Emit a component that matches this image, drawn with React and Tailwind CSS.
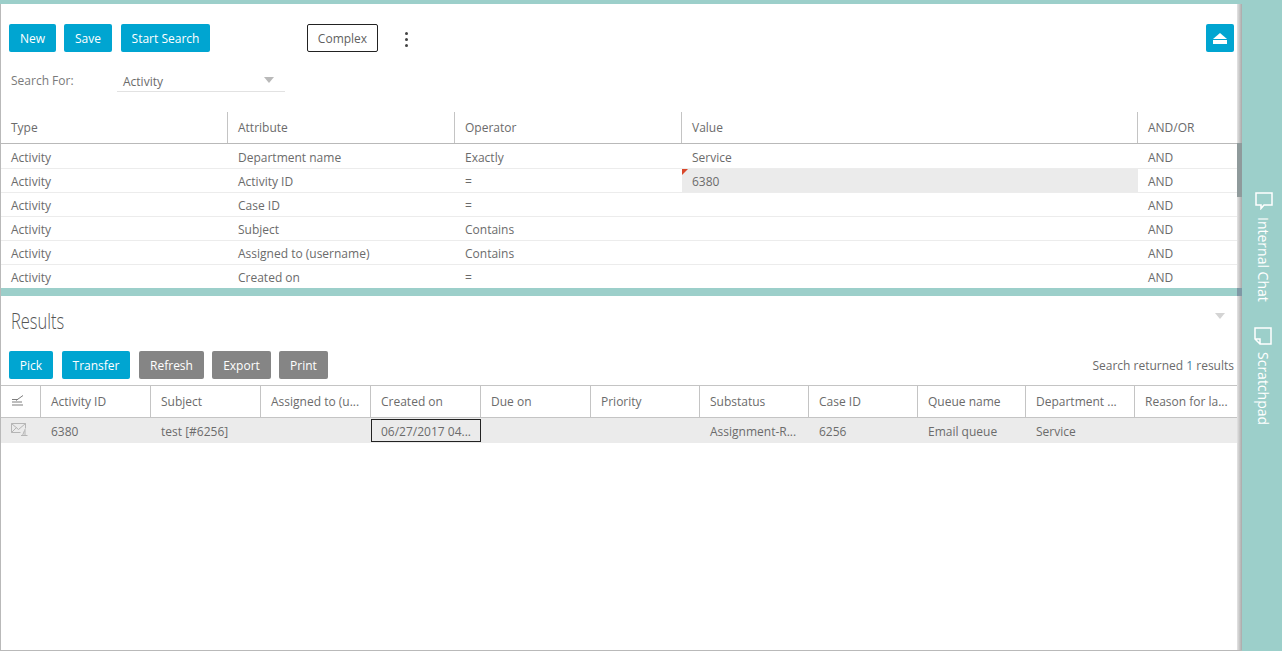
const criteriaRows = [
  ['Activity', 'Department name', 'Exactly', 'Service', 'AND'],
  ['Activity', 'Activity ID', '=', '6380', 'AND'],
  ['Activity', 'Case ID', '=', '', 'AND'],
  ['Activity', 'Subject', 'Contains', '', 'AND'],
  ['Activity', 'Assigned to (username)', 'Contains', '', 'AND'],
  ['Activity', 'Created on', '=', '', 'AND'],
];

const resultColumns = [
  ['Activity ID', '6380'],
  ['Subject', 'test [#6256]'],
  ['Assigned to (u...', ''],
  ['Created on', '06/27/2017 04...'],
  ['Due on', ''],
  ['Priority', ''],
  ['Substatus', 'Assignment-R...'],
  ['Case ID', '6256'],
  ['Queue name', 'Email queue'],
  ['Department ...', 'Service'],
  ['Reason for la...', ''],
];

const criteriaGrid = 'grid grid-cols-[227px_227px_227px_456px_1fr]';
const resultsGrid = 'grid grid-cols-[40px_110px_110px_110px_110px_110px_109px_109px_109px_108px_109px_1fr]';

function Button({ children, gray, className }) {
  return (
    <button className={`h-7 pt-px rounded-[2px] text-white text-xs ${gray ? 'bg-[#858585]' : 'bg-[#00a5d1]'} ${className}`}>
      {children}
    </button>
  );
}

function Caret({ className }) {
  return <div className={`w-0 h-0 border-x-[5px] border-x-transparent border-t-[6px] ${className}`}></div>;
}

export default function App() {
  return (
    <div className="w-[1282px] h-[651px] overflow-hidden flex flex-col bg-[#9ccfca] text-xs text-[#6b6b6b] font-['Open_Sans',sans-serif]">
      <div className="h-1 shrink-0"></div>
      <div className="flex flex-1 min-h-0">
        {/* main panel */}
        <div className="relative w-[1242px] h-full bg-white border-l border-b border-[#b9b9b9] flex flex-col pr-[5px]">
          <div className="flex items-center h-7 mt-5 pl-2 pr-[3px]">
            <Button className="w-[47px]">New</Button>
            <Button className="w-[48px] ml-2">Save</Button>
            <Button className="w-[89px] ml-[9px]">Start Search</Button>
            <button className="ml-[97px] h-7 w-[71px] pt-px border border-[#222] rounded-[2px] text-[#5f5f5f]">Complex</button>
            <div className="ml-[27px] mt-0.5 flex flex-col gap-[3px]">
              <div className="w-[3px] h-[3px] rounded-full bg-[#444]"></div>
              <div className="w-[3px] h-[3px] rounded-full bg-[#444]"></div>
              <div className="w-[3px] h-[3px] rounded-full bg-[#444]"></div>
            </div>
            <button className="ml-auto w-7 h-7 pt-px rounded-[2px] bg-[#00a5d1] flex flex-col items-center justify-center">
              <div className="w-0 h-0 border-x-[7px] border-x-transparent border-b-[6px] border-b-white"></div>
              <div className="w-[14px] h-1 mt-px bg-white"></div>
            </button>
          </div>

          <div className="flex items-center h-6 mt-4 pl-2.5">
            <span className="w-[106px] pt-0.5 text-[#7a7a7a]">Search For:</span>
            <div className="w-[168px] h-6 pl-1.5 pr-[11px] flex items-center justify-between border-b border-[#e2e2e2] pt-1">
              <span>Activity</span>
              <Caret className="border-t-[#b9b9b9] -mt-1" />
            </div>
          </div>

          {/* criteria table */}
          <div className={`${criteriaGrid} h-[32px] mt-[20px] border-b border-[#b9b9b9]`}>
            {['Type', 'Attribute', 'Operator', 'Value', 'AND/OR'].map((title, i) => (
              <div key={title} className={`flex items-center pl-2.5 ${i < 4 ? 'border-r border-[#c4c4c4]' : ''}`}>
                {title}
              </div>
            ))}
          </div>
          <div className="h-[144px] pt-px overflow-hidden">
            {criteriaRows.map((row, r) => (
              <div key={r} className={`${criteriaGrid} h-6 border-b border-[#ececec]`}>
                {row.map((cell, c) => (
                  <div key={c} className={`relative flex items-center pl-2.5 pt-0.5 ${r === 1 && c === 3 ? 'bg-[#ebebeb]' : ''}`}>
                    {r === 1 && c === 3 && (
                      <div className="absolute left-0 top-0 w-0 h-0 border-t-[6px] border-t-[#d9482b] border-r-[6px] border-r-transparent"></div>
                    )}
                    {cell}
                  </div>
                ))}
              </div>
            ))}
          </div>

          {/* splitter */}
          <div className="h-2 shrink-0 bg-[#9ccfca]"></div>

          <div className="h-[55px] flex items-center justify-between pl-2.5 pr-3 pb-[5px] shrink-0">
            <span className="text-[22px] font-light text-[#555] scale-x-[0.75] origin-left">Results</span>
            <Caret className="border-t-[#d4d4d4] mb-[10px]" />
          </div>

          <div className="flex items-center justify-between pl-2 pr-[3px] h-7">
            <div className="flex">
              <Button className="w-[44px]">Pick</Button>
              <Button className="w-[68px] ml-[9px]">Transfer</Button>
              <Button gray className="w-[65px] ml-[9px]">Refresh</Button>
              <Button gray className="w-[59px] ml-2">Export</Button>
              <Button gray className="w-[49px] ml-2">Print</Button>
            </div>
            <span className="pt-px">Search returned <span className="text-[#4d7f9c]">1</span> results</span>
          </div>

          {/* results table */}
          <div className={`${resultsGrid} h-[33px] mt-1.5 border-y border-[#c4c4c4]`}>
            <div className="flex items-center justify-center pr-[6px] pb-1 border-r border-[#c4c4c4]">
              <svg width="14" height="12" viewBox="0 0 14 12" fill="none" stroke="#7d7d7d" strokeWidth="1">
                <path d="M1 5.5h6M1 8h10M1 11h11M5 6.5l7-5" />
              </svg>
            </div>
            {resultColumns.map(([title], i) => (
              <div key={title} className={`flex items-center pl-2.5 ${i < 10 ? 'border-r border-[#c4c4c4]' : ''}`}>
                {title}
              </div>
            ))}
          </div>
          <div className={`${resultsGrid} h-[25px] bg-[#ebebeb]`}>
            <div className="flex items-center justify-center pr-1 pb-1">
              <svg width="17" height="14" viewBox="0 0 17 14" fill="none" stroke="#b5b5b5" strokeWidth="1">
                <path d="M.5 1.5h14v5M.5 1.5v9h9M.5 1.5l7 6 7-6M.5 10.5l5-5M10 13.5h6.5M14 7v6.5M11.5 13.5l2-5" />
              </svg>
            </div>
            {resultColumns.map(([title, value], i) => (
              <div key={title} className={`flex items-center pt-0.5 ${i === 3 ? 'border border-[#222] my-px pl-[9px]' : 'pl-2.5'}`}>
                {value}
              </div>
            ))}
          </div>

          {/* scrollbar strip over the right edge */}
          <div className="absolute right-0 top-0 bottom-0 w-[5px] bg-gradient-to-r from-[#e4e4e4] to-[#a9a9a9]"></div>
          <div className="absolute right-0 top-[139px] h-[54px] w-[5px] bg-[#8f9a9b]"></div>
          <div className="absolute right-0 top-[284px] h-2 w-[5px] bg-[#7f98a5]"></div>
        </div>

        {/* side tabs */}
        <div className="flex-1 flex flex-col items-center pt-[188px] text-white text-sm">
          <svg className="ml-[3px]" width="18" height="18" viewBox="0 0 18 18" fill="none" stroke="white" strokeWidth="1.5">
            <path d="M1 1h16v12H9l-3 3.5V13H1z" />
          </svg>
          <span className="[writing-mode:vertical-rl] mt-[7px] leading-none ml-px">Internal Chat</span>
          <svg className="mt-[25px] ml-px" width="18" height="18" viewBox="0 0 18 18" fill="none" stroke="white" strokeWidth="1.5">
            <path d="M1 1h16v16H6l-5-5zM1 12h5v5" />
          </svg>
          <span className="[writing-mode:vertical-rl] mt-[7px] leading-none ml-px">Scratchpad</span>
        </div>
      </div>
    </div>
  );
}
